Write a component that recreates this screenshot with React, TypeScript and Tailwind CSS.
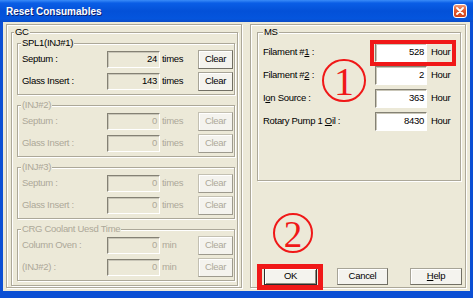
import clsx from "clsx";

interface GcRow {
  label: string;
  value: string;
}

interface GcGroup {
  title: string;
  unit: string;
  enabled: boolean;
  rows: GcRow[];
}

const gcGroups: GcGroup[] = [
  {
    title: "SPL1(INJ#1)",
    unit: "times",
    enabled: true,
    rows: [
      { label: "Septum :", value: "24" },
      { label: "Glass Insert :", value: "143" }
    ]
  },
  {
    title: "(INJ#2)",
    unit: "times",
    enabled: false,
    rows: [
      { label: "Septum :", value: "0" },
      { label: "Glass Insert :", value: "0" }
    ]
  },
  {
    title: "(INJ#3)",
    unit: "times",
    enabled: false,
    rows: [
      { label: "Septum :", value: "0" },
      { label: "Glass Insert :", value: "0" }
    ]
  },
  {
    title: "CRG Coolant Uesd Time",
    unit: "min",
    enabled: false,
    rows: [
      { label: "Column Oven :", value: "0" },
      { label: "(INJ#2) :", value: "0" }
    ]
  }
];

const etched = "border border-[#aca899] shadow-[inset_1px_1px_0_#fff,1px_1px_0_#fff]";
const sunken =
  "border border-t-[#848174] border-l-[#848174] border-b-white border-r-white shadow-[inset_1px_1px_0_#c9c6b8]";
const legendCls = "px-[1px] leading-[10px] bg-[#ece9d8]";

function Field({ value, enabled, white, className }: { value: string; enabled: boolean; white?: boolean; className: string }) {
  return (
    <div
      className={clsx(
        "flex items-center justify-end pr-[2px]",
        sunken,
        white ? "bg-white" : "bg-[#ece9d8]",
        enabled ? "text-black" : "text-[#aca899]",
        className
      )}
    >
      {value}
    </div>
  );
}

function Button({ children, enabled = true, isDefault, className }: { children: React.ReactNode; enabled?: boolean; isDefault?: boolean; className: string }) {
  return (
    <button
      className={clsx(
        "flex items-center justify-center bg-[#f4f3ee] border",
        isDefault
          ? "border-[#2c2c2c] shadow-[inset_1px_1px_0_#fff,inset_-1px_-1px_0_#8c897d]"
          : enabled
          ? "border-[#a7a497] border-r-[#716f64] border-b-[#716f64] shadow-[inset_1px_1px_0_#fff]"
          : "border-[#c3c0b2] border-r-[#9d9a8e] border-b-[#9d9a8e] shadow-[inset_1px_1px_0_#fff]",
        enabled ? "text-black" : "text-[#aca899]",
        className
      )}
    >
      {children}
    </button>
  );
}

function GcBox({ group }: { group: GcGroup }) {
  const muted = !group.enabled;
  return (
    <fieldset className={clsx("ml-[5px] w-[218px] h-[57px]", etched)}>
      <legend className={clsx("ml-[3px]", legendCls, muted ? "text-[#aca899]" : "text-black")}>{group.title}</legend>
      <div className="flex flex-col">
        {group.rows.map(row => (
          <div key={row.label} className="flex items-center h-[22px] pl-[4px]">
            <span className={clsx("w-[85px]", muted ? "text-[#aca899]" : "text-black")}>{row.label}</span>
            <Field value={row.value} enabled={group.enabled} className="w-[53px] h-[17px]" />
            <span className={clsx("ml-[2px] w-[36px]", muted ? "text-[#aca899]" : "text-black")}>{group.unit}</span>
            <Button enabled={group.enabled} className="w-[35px] h-[19px]">
              Clear
            </Button>
          </div>
        ))}
      </div>
    </fieldset>
  );
}

const msRows = [
  { pre: "Filament #", key: "1", post: " :", value: "528" },
  { pre: "Filament #", key: "2", post: " :", value: "2" },
  { pre: "I", key: "o", post: "n Source :", value: "363" },
  { pre: "Rotary Pump 1 ", key: "O", post: "il :", value: "8430" }
];

export default function App() {
  return (
    <div className="relative w-[473px] h-[298px] flex flex-col bg-[#0b4fd4] overflow-hidden font-['Liberation_Sans',Arial,sans-serif] text-[9.5px] tracking-[-0.3px] text-black">
      <div className="h-[22px] flex items-center bg-[linear-gradient(to_bottom,#3a8cf8,#0a5ee6_14%,#0351d8_50%,#0455dd_85%,#0a4cc8)]">
        <span className="ml-[6px] text-white font-bold text-[10px] tracking-normal [text-shadow:1px_1px_0_#0a1e6e]">
          Reset Consumables
        </span>
        <div className="ml-auto mr-[6px] w-[14px] h-[14px] rounded-[3px] border border-white bg-[linear-gradient(to_bottom,#f09a78,#e25a2e_45%,#d0421a)] flex items-center justify-center">
          <svg width="8" height="8" viewBox="0 0 8 8">
            <path d="M1 1L7 7M7 1L1 7" stroke="#fff" strokeWidth="1.8" strokeLinecap="round" />
          </svg>
        </div>
      </div>

      <div className="flex-1 mx-[3px] mb-[7px] bg-[#ece9d8] flex pt-[2px] pl-[3px]">
        <div className={clsx("w-[236px] h-[264px]", etched)}>
          <fieldset className={clsx("ml-[4px] mt-[2px] w-[227px] h-[259px]", etched)}>
            <legend className={clsx("ml-[2px]", legendCls)}>GC</legend>
            <div className="flex flex-col gap-[5px] pt-[1px]">
              {gcGroups.map(g => (
                <GcBox key={g.title} group={g} />
              ))}
            </div>
          </fieldset>
        </div>

        <div className={clsx("ml-[8px] w-[216px] h-[264px] flex flex-col", etched)}>
          <fieldset className={clsx("ml-[6px] mt-[2px] w-[204px] h-[154px]", etched)}>
            <legend className={clsx("ml-[5px]", legendCls)}>MS</legend>
            <div className="flex flex-col gap-[4px] pt-[6px]">
              {msRows.map((row, i) => (
                <div key={row.value} className="relative flex items-center h-[19px] pl-[5px]">
                  <span className="w-[112px]">
                    {row.pre}
                    <span className="underline underline-offset-[1px]">{row.key}</span>
                    {row.post}
                  </span>
                  <Field value={row.value} enabled white className="w-[52px] h-[19px]" />
                  <span className="ml-[4px]">Hour</span>
                  {i === 0 && (
                    <div className="absolute left-[112px] -top-[3px] w-[86px] h-[26px] border-4 border-[#f01818]" />
                  )}
                </div>
              ))}
            </div>
          </fieldset>

          <div className="mt-auto flex pb-[2px]">
            <div className="relative ml-[13px]">
              <Button isDefault className="w-[53px] h-[17px]">
                OK
              </Button>
              <div className="absolute -left-[7px] -top-[4px] -right-[6px] -bottom-[5px] border-[5px] border-[#f01818]" />
            </div>
            <Button className="ml-[20px] w-[51px] h-[17px]">Cancel</Button>
            <Button className="ml-[22px] w-[52px] h-[17px]">
              <span className="underline underline-offset-[1px]">H</span>elp
            </Button>
          </div>
        </div>
      </div>

      <div className="absolute left-[322px] top-[59px] w-[44px] h-[43px] rounded-full border-2 border-[#f01818] flex items-center justify-center pt-[2px] text-[#f01818] font-['Liberation_Serif',serif] text-[40px] leading-none tracking-normal">
        1
      </div>
      <div className="absolute left-[273px] top-[213px] w-[40px] h-[40px] rounded-full border-2 border-[#f01818] flex items-center justify-center pt-[2px] text-[#f01818] font-['Liberation_Serif',serif] text-[37px] leading-none tracking-normal">
        2
      </div>
    </div>
  );
}
